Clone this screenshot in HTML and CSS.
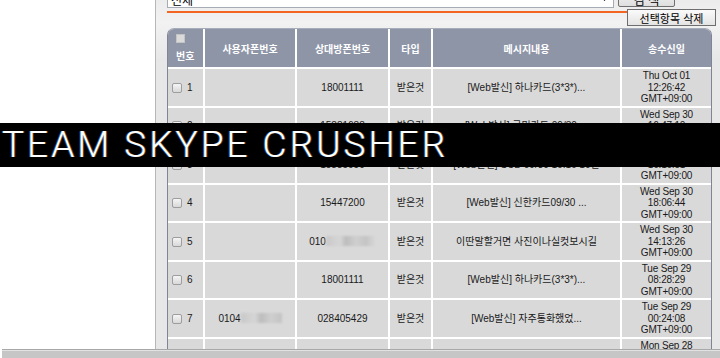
FILE: index.html
```html
<!DOCTYPE html>
<html>
<head>
  <title>문자 내역</title>
  <link rel="stylesheet" href="styles.css">
</head>
<body>

<div class="page">
  <div class="side"></div>

  <div class="panel">
    <!-- search bar (scrolled half out of view) -->
    <div class="search">
      <div class="select">
        <span>전체</span>
        <svg class="arrow" width="7" height="4" viewBox="0 0 7 4"><path d="M0 0h7L3.5 4z" fill="#000"/></svg>
      </div>
      <button class="btn-search">검 색</button>
    </div>

    <div class="actions">
      <div class="rule"></div>
      <button class="btn-delete">선택항목 삭제</button>
    </div>

    <!-- message list -->
    <div class="grid">
      <table>
        <colgroup>
          <col style="width:37px">
          <col style="width:92px">
          <col style="width:93px">
          <col style="width:43px">
          <col style="width:189px">
          <col style="width:89px">
        </colgroup>
        <thead>
          <tr>
            <th class="num"><input type="checkbox" class="cb-all"><span>번호</span></th>
            <th>사용자폰번호</th>
            <th>상대방폰번호</th>
            <th>타입</th>
            <th>메시지내용</th>
            <th>송수신일</th>
          </tr>
        </thead>
        <tbody>
          <tr>
            <td class="num"><input type="checkbox" class="cb">1</td>
            <td></td>
            <td>18001111</td>
            <td>받은것</td>
            <td>[Web발신] 하나카드(3*3*)...</td>
            <td class="date">Thu Oct 01<br>12:26:42<br>GMT+09:00</td>
          </tr>
          <tr>
            <td class="num"><input type="checkbox" class="cb">2</td>
            <td></td>
            <td>15881688</td>
            <td>받은것</td>
            <td>[Web발신] 국민카드 09/30 ...</td>
            <td class="date">Wed Sep 30<br>16:47:10<br>GMT+09:00</td>
          </tr>
          <tr>
            <td class="num"><input type="checkbox" class="cb">3</td>
            <td></td>
            <td>15885050</td>
            <td>받은것</td>
            <td>[Web발신] SCB 09/30 16:16 10만</td>
            <td class="date">Wed Sep 30<br>16:16:51<br>GMT+09:00</td>
          </tr>
          <tr>
            <td class="num"><input type="checkbox" class="cb">4</td>
            <td></td>
            <td>15447200</td>
            <td>받은것</td>
            <td>[Web발신] 신한카드09/30 ...</td>
            <td class="date">Wed Sep 30<br>18:06:44<br>GMT+09:00</td>
          </tr>
          <tr>
            <td class="num"><input type="checkbox" class="cb">5</td>
            <td></td>
            <td>010<span class="blur"></span></td>
            <td>받은것</td>
            <td>이딴말할거면 사진이나실컷보시길</td>
            <td class="date">Wed Sep 30<br>14:13:26<br>GMT+09:00</td>
          </tr>
          <tr>
            <td class="num"><input type="checkbox" class="cb">6</td>
            <td></td>
            <td>18001111</td>
            <td>받은것</td>
            <td>[Web발신] 하나카드(3*3*)...</td>
            <td class="date">Tue Sep 29<br>08:28:29<br>GMT+09:00</td>
          </tr>
          <tr>
            <td class="num"><input type="checkbox" class="cb">7</td>
            <td>0104<span class="blur short"></span></td>
            <td>028405429</td>
            <td>받은것</td>
            <td>[Web발신] 자주통화했었...</td>
            <td class="date">Tue Sep 29<br>00:24:08<br>GMT+09:00</td>
          </tr>
          <tr>
            <td class="num"><input type="checkbox" class="cb">8</td>
            <td></td>
            <td>18001111</td>
            <td>받은것</td>
            <td>[Web발신] 하나카드(3*3*)...</td>
            <td class="date">Mon Sep 28<br>19:02:11<br>GMT+09:00</td>
          </tr>
        </tbody>
      </table>
    </div>
  </div>
</div>

<!-- watermark band over the list -->
<div class="banner">TEAM SKYPE CRUSHER</div>

<div class="statusbar"></div>

</body>
</html>
```

FILE: styles.css
```css
body {
  margin: 0;
  font-family: "Liberation Sans", "Noto Sans CJK KR", sans-serif;
  background: #fff;
  overflow: hidden;
  position: relative;
}

.page {
  display: flex;
  height: 349px;
  overflow: hidden;
}

.side {
  width: 155px;
  background: #fff;
}

.panel {
  flex: 1;
  border-left: 1px solid #b7b7b7;
  background: linear-gradient(#ececec, #f2f2f2 22px, #e7e7e7 60px, #e7e7e7);
  padding: 0 4px 0 11px;
}

/* search row */
.search {
  display: flex;
  gap: 4px;
  margin-top: -10px;
  height: 18px;
}

.select {
  width: 447px;
  box-sizing: border-box;
  border: 1px solid #a5acb5;
  background: #fff;
  display: flex;
  align-items: center;
  padding: 0 5px 0 3px;
  font-size: 12px;
  color: #000;
}

.select .arrow {
  margin-left: auto;
}

.btn-search {
  width: 57px;
  height: 17px;
  padding: 0;
  border: 1px solid #707070;
  border-radius: 2px;
  background: linear-gradient(#f6f6f6, #dedede);
  font-family: inherit;
  font-size: 12px;
  color: #000;
}

/* delete row */
.actions {
  display: flex;
  margin-top: 1px;
}

.rule {
  flex: 1;
  height: 2px;
  margin-top: 2px;
  background: #f26522;
}

.btn-delete {
  width: 89px;
  height: 17px;
  padding: 0;
  border: 1px solid #6e6e6e;
  background: linear-gradient(#fafafa, #e4e4e4);
  font-family: inherit;
  font-size: 11px;
  color: #000;
}

/* table */
.grid {
  width: 545px;
  box-sizing: border-box;
  margin-top: 2px;
  border: 1px solid #7f8596;
  border-top-color: #a6acba;
  border-bottom: none;
  border-radius: 7px 7px 0 0;
  overflow: hidden;
}

table {
  width: 543px;
  table-layout: fixed;
  border-collapse: separate;
  border-spacing: 0;
}

th, td {
  border-right: 2px solid #fff;
  border-bottom: 2px solid #fff;
  text-align: center;
  white-space: nowrap;
}

th:last-child, td:last-child {
  border-right: none;
}

th {
  background: #8e95a7;
  color: #fff;
  font-size: 10px;
  font-weight: bold;
  height: 38px;
  padding: 0;
}

th.num {
  text-align: left;
  padding-left: 8px;
}

th.num span {
  display: block;
  margin-top: 5px;
}

.cb-all {
  appearance: none;
  display: block;
  width: 9px;
  height: 9px;
  margin: 0;
  border: 1px solid #c4c4c4;
  background: #dadada;
}

td {
  background: #d9d9d9;
  color: #1a1a1a;
  font-size: 10px;
  line-height: 11.5px;
  padding: 1px 3px;
}

td.num {
  text-align: left;
  padding-left: 4px;
}

.cb {
  appearance: none;
  width: 10px;
  height: 10px;
  margin: 0 5px 0 0;
  border: 1px solid #9d9d9d;
  border-radius: 2px;
  background: linear-gradient(#f5f5f5, #d8d8d8);
  vertical-align: -2px;
}

td.date {
  letter-spacing: -0.2px;
}

/* masked phone digits */
.blur {
  display: inline-block;
  width: 50px;
  height: 10px;
  vertical-align: -1px;
  background: linear-gradient(90deg, #c9c9c9 0, #d6d6d6 14px, #bdbdbd 20px, #cfcfcf 30px, #c4c4c4 40px, #dadada 50px);
  filter: blur(1px);
}

.blur.short {
  width: 41px;
}

/* watermark */
.banner {
  position: absolute;
  top: 123px;
  left: 0;
  right: 0;
  height: 44px;
  background: #000;
  color: #fff;
  font-family: Roboto, "Liberation Sans", sans-serif;
  font-weight: 300;
  font-size: 37px;
  line-height: 44px;
  letter-spacing: 3px;
  padding-left: 2px;
  text-shadow: -1px 0 rgba(90, 170, 255, 0.5), 1px 0 rgba(255, 170, 80, 0.4);
}

.statusbar {
  height: 8px;
  margin-left: 2px;
  border-top: 1px solid #a8a8a8;
  background: #c6c6c6;
  box-shadow: inset 0 1px #e2e2e2;
}
```
